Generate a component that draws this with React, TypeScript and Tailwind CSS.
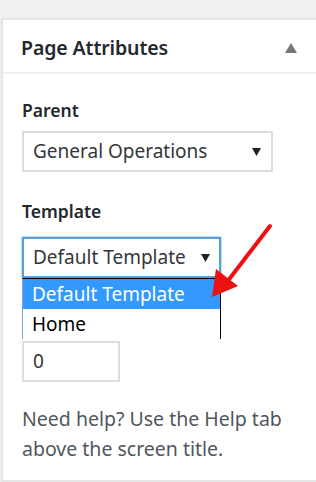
import React from 'react';

const font = { fontFamily: '"Noto Sans", "Open Sans", sans-serif' };

const Caret: React.FC<{ className?: string }> = ({ className }) => (
  <svg className={className} width="9" height="8" viewBox="0 0 9 8">
    <path d="M0 0 H9 L4.5 8 Z" fill="#222" />
  </svg>
);

const App: React.FC = () => {
  return (
    <div className="w-[316px] h-[482px] bg-[#f1f1f1] pt-[18px] pl-[1px] overflow-hidden" style={font}>
      <div className="relative w-[330px] h-[464px] bg-white border-2 border-[#e5e5e5]">
        {/* Header */}
        <div className="h-[54px] border-b-2 border-[#eeeeee] flex items-center pl-[18px] pt-[3px]">
          <h2 className="text-[19.5px] font-semibold text-[#23282d] tracking-[-0.1px]">Page Attributes</h2>
          <svg className="ml-auto mr-[32px]" width="12" height="10" viewBox="0 0 12 10">
            <path d="M6 0 L12 10 H0 Z" fill="#72777c" />
          </svg>
        </div>

        {/* Body */}
        <div className="pl-[19px] pt-[24px] text-[#23282d]">
          <p className="text-[17.5px] font-semibold leading-[24px]">Parent</p>
          <div className="mt-[9px] w-[251px] h-[41px] border-2 border-[#dddddd] flex items-center pl-[9px] pr-[10px]">
            <span className="text-[19px] text-[#32373c]">General Operations</span>
            <Caret className="ml-auto" />
          </div>

          <p className="mt-[27px] text-[17.5px] font-semibold leading-[24px]">Template</p>
          <div className="relative mt-[14px] w-[199px]">
            <div className="h-[41px] border-2 border-[#5b9dd9] shadow-[0_0_2px_rgba(30,140,190,0.8)] flex items-center pl-[9px] pr-[9px]">
              <span className="text-[19px] text-[#32373c]">Default Template</span>
              <Caret className="ml-auto" />
            </div>
            <div className="absolute left-0 top-[41px] w-[199px] h-[61px] bg-white border-t border-r border-black border-l border-l-[#7aa7d6] z-10">
              <div className="h-[30px] bg-[#3399ff] text-white text-[19px] flex items-center pl-[9px]">Default Template</div>
              <div className="h-[30px] text-black text-[19px] flex items-center pl-[9px]">Home</div>
            </div>
          </div>

          <p className="mt-[14px] text-[17px] font-semibold leading-[24px] invisible">Order</p>
          <div className="mt-[25px] w-[98px] h-[41px] border-2 border-[#dddddd] flex items-center pl-[9px]">
            <span className="text-[19px] text-[#32373c]">0</span>
          </div>

          <p className="mt-[22px] text-[19.5px] leading-[30px] text-[#50575e] w-[280px]">
            Need help? Use the Help tab above the screen title.
          </p>
        </div>

        {/* Red arrow annotation */}
        <svg className="absolute left-0 top-0 z-20 pointer-events-none" width="316" height="464" viewBox="0 0 316 464">
          <line x1="267" y1="206" x2="224" y2="262" stroke="#ee1111" strokeWidth="4" strokeLinecap="round" />
          <path d="M209 277 L213 249 L235 266 Z" fill="#ee1111" />
        </svg>
      </div>
    </div>
  );
};

export default App;
